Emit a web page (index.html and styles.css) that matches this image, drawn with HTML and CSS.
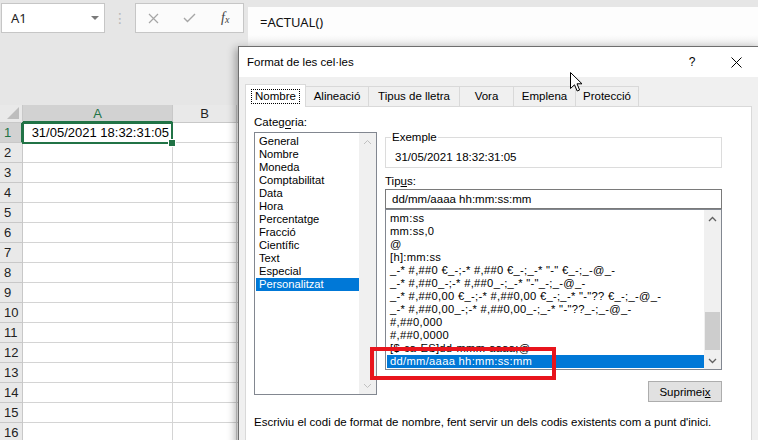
FILE: index.html
```html
<!DOCTYPE html>
<html lang="ca">
<head>
<meta charset="UTF-8">
<meta name="viewport" content="width=device-width, initial-scale=1.0">
<title>Format de les cel·les</title>
<link rel="stylesheet" href="styles.css">
</head>
<body>

<div class="app">
    <!-- name box + formula bar -->
    <div class="topbar">
        <div class="namebox"><span>A1</span><span class="caret"></span></div>
        <div class="grip">⋮</div>
        <div class="fxbtns">
            <span class="fxslot">
                <svg width="11" height="11" viewBox="0 0 11 11"><path d="M1 1 L10 10 M10 1 L1 10" stroke="#a6a6a6" stroke-width="1.2" fill="none"/></svg>
            </span>
            <span class="fxslot">
                <svg width="13" height="10" viewBox="0 0 13 10"><path d="M1 5 L4.5 8.5 L12 1" stroke="#a6a6a6" stroke-width="1.4" fill="none"/></svg>
            </span>
            <span class="fxslot fx">f<small>x</small></span>
        </div>
        <div class="formula">=ACTUAL()</div>
    </div>
    <div class="ribbon-gap"></div>

    <div class="sheet">
        <div class="corner"></div><div class="colhead sel">A</div><div class="colhead">B</div><div class="colhead"></div>
        <div class="rowhead sel">1</div><div class="cell active">31/05/2021 18:32:31:05</div><div class="cell"></div><div class="cell"></div>
        <div class="rowhead">2</div><div class="cell"></div><div class="cell"></div><div class="cell"></div>
        <div class="rowhead">3</div><div class="cell"></div><div class="cell"></div><div class="cell"></div>
        <div class="rowhead">4</div><div class="cell"></div><div class="cell"></div><div class="cell"></div>
        <div class="rowhead">5</div><div class="cell"></div><div class="cell"></div><div class="cell"></div>
        <div class="rowhead">6</div><div class="cell"></div><div class="cell"></div><div class="cell"></div>
        <div class="rowhead">7</div><div class="cell"></div><div class="cell"></div><div class="cell"></div>
        <div class="rowhead">8</div><div class="cell"></div><div class="cell"></div><div class="cell"></div>
        <div class="rowhead">9</div><div class="cell"></div><div class="cell"></div><div class="cell"></div>
        <div class="rowhead">10</div><div class="cell"></div><div class="cell"></div><div class="cell"></div>
        <div class="rowhead">11</div><div class="cell"></div><div class="cell"></div><div class="cell"></div>
        <div class="rowhead">12</div><div class="cell"></div><div class="cell"></div><div class="cell"></div>
        <div class="rowhead">13</div><div class="cell"></div><div class="cell"></div><div class="cell"></div>
        <div class="rowhead">14</div><div class="cell"></div><div class="cell"></div><div class="cell"></div>
        <div class="rowhead">15</div><div class="cell"></div><div class="cell"></div><div class="cell"></div>
        <div class="rowhead">16</div><div class="cell"></div><div class="cell"></div><div class="cell"></div>
    </div>

    <!-- Format Cells dialog window -->
    <div class="dialog">
        <div class="titlebar">
            <span>Format de les cel·les</span>
            <span class="help">?</span>
            <span class="close">
                <svg width="11" height="11" viewBox="0 0 11 11"><path d="M0.5 0.5 L10.5 10.5 M10.5 0.5 L0.5 10.5" stroke="#000" stroke-width="1" fill="none"/></svg>
            </span>
        </div>
        <div class="dlg-body">
            <div class="tabs">
                <div class="tab active" style="width: 61px"><span class="focus">Nombre</span></div>
                <div class="tab" style="width: 64px">Alineació</div>
                <div class="tab" style="width: 92px">Tipus de lletra</div>
                <div class="tab" style="width: 55px">Vora</div>
                <div class="tab" style="width: 63px">Emplena</div>
                <div class="tab" style="width: 64px">Protecció</div>
            </div>
            <div class="panel">
                <div class="panel-main">
                    <div class="left-col">
                        <div class="label cat-label">Categoria:</div>
                        <div class="listbox cat-list">
                            <div class="items">
                                <div class="item">General</div>
                                <div class="item">Nombre</div>
                                <div class="item">Moneda</div>
                                <div class="item">Comptabilitat</div>
                                <div class="item">Data</div>
                                <div class="item">Hora</div>
                                <div class="item">Percentatge</div>
                                <div class="item">Fracció</div>
                                <div class="item">Científic</div>
                                <div class="item">Text</div>
                                <div class="item">Especial</div>
                                <div class="item selected">Personalitzat</div>
                            </div>
                            <div class="scrollbar disabled">
                                <span class="arrow"><svg width="9" height="6" viewBox="0 0 9 6"><path d="M1 5 L4.5 1.5 L8 5" stroke="currentColor" fill="none"/></svg></span>
                                <span class="track"></span>
                                <span class="arrow"><svg width="9" height="6" viewBox="0 0 9 6"><path d="M1 1 L4.5 4.5 L8 1" stroke="currentColor" fill="none"/></svg></span>
                            </div>
                        </div>
                    </div>
                    <div class="right-col">
                        <fieldset class="sample">
                            <legend>Exemple</legend>
                            <div class="sample-value">31/05/2021 18:32:31:05</div>
                        </fieldset>
                        <div class="label type-label">Tip<u>u</u>s:</div>
                        <div class="type-input">dd/mm/aaaa hh:mm:ss:mm</div>
                        <div class="listbox type-list">
                            <div class="items">
                                <div class="item">mm:ss</div>
                                <div class="item">mm:ss,0</div>
                                <div class="item">@</div>
                                <div class="item">[h]:mm:ss</div>
                                <div class="item">_-* #,##0 €_-;-* #,##0 €_-;_-* "-" €_-;_-@_-</div>
                                <div class="item">_-* #,##0_-;-* #,##0_-;_-* "-"_-;_-@_-</div>
                                <div class="item">_-* #,##0,00 €_-;-* #,##0,00 €_-;_-* "-"?? €_-;_-@_-</div>
                                <div class="item">_-* #,##0,00_-;-* #,##0,00_-;_-* "-"??_-;_-@_-</div>
                                <div class="item">#,##0,000</div>
                                <div class="item">#,##0,0000</div>
                                <div class="item">[$-ca-ES]dd-mmm-aaaa;@</div>
                                <div class="item selected">dd/mm/aaaa hh:mm:ss:mm</div>
                            </div>
                            <div class="scrollbar">
                                <span class="arrow"><svg width="9" height="6" viewBox="0 0 9 6"><path d="M1 5 L4.5 1.5 L8 5" stroke="currentColor" stroke-width="1.3" fill="none"/></svg></span>
                                <span class="track"><span class="thumb"></span></span>
                                <span class="arrow"><svg width="9" height="6" viewBox="0 0 9 6"><path d="M1 1 L4.5 4.5 L8 1" stroke="currentColor" stroke-width="1.3" fill="none"/></svg></span>
                            </div>
                        </div>
                        <div class="btn-row"><button class="btn">Suprimei<u>x</u></button></div>
                    </div>
                </div>
                <p class="hint">Escriviu el codi de format de nombre, fent servir un dels codis existents com a punt d'inici.</p>
            </div>
        </div>
    </div>

    <!-- red annotation box -->
    <div class="mark"></div>

    <svg class="cursor" width="13" height="20" viewBox="0 0 13 20">
        <path d="M0.5 0.5 L0.5 16.5 L4.5 12.8 L7.2 19 L9.6 18 L7 11.8 L12 11.8 Z" fill="#fff" stroke="#000" stroke-width="1" stroke-linejoin="round"/>
    </svg>
</div>

</body>
</html>
```

FILE: styles.css
```css
* {
    box-sizing: border-box;
}
body {
    margin: 0;
    font-family: "Noto Sans", sans-serif;
    color: #000;
}
.app {
    position: relative;
    width: 758px;
    height: 440px;
    overflow: hidden;
    background-color: #e6e6e6;
}

/* formula bar */
.topbar {
    display: flex;
    align-items: flex-start;
    height: 46px;
    padding-top: 3px;
}
.namebox {
    display: flex;
    align-items: center;
    width: 104px;
    height: 30px;
    margin-left: 1px;
    padding-left: 9px;
    background-color: #fff;
    border: 1px solid #c6c6c6;
    font-size: 13px;
    color: #222;
}
.caret {
    margin-left: auto;
    margin-right: 5px;
    border-left: 4px solid transparent;
    border-right: 4px solid transparent;
    border-top: 4px solid #7a7a7a;
}
.grip {
    width: 30px;
    text-align: center;
    line-height: 30px;
    font-family: "DejaVu Sans", sans-serif;
    font-size: 14px;
    color: #b8b8b8;
}
.fxbtns {
    display: flex;
    align-items: center;
    width: 109px;
    height: 30px;
    background-color: #fbfbfb;
    border: 1px solid #c6c6c6;
}
.fxslot {
    display: flex;
    justify-content: center;
    align-items: center;
    width: 36px;
}
.fx {
    font-family: "Liberation Serif", serif;
    font-style: italic;
    font-size: 14px;
    color: #444;
}
.fx small {
    font-size: 10px;
    margin-top: 3px;
}
.formula {
    flex: 1;
    height: 39px;
    margin-left: 4px;
    margin-top: 4px;
    padding: 6px 0 0 12px;
    line-height: 18px;
    font-size: 13px;
    color: #111;
    background: linear-gradient(#fdfdfd 72%, #ececec);
}
.ribbon-gap {
    height: 59px;
}

/* worksheet */
.sheet {
    display: grid;
    grid-template-columns: 23px 150px 64px 64px;
    grid-template-rows: 18px repeat(16, 20px);
    background-color: #fff;
}
.corner, .colhead, .rowhead {
    background-color: #e9e9e9;
    border-right: 1px solid #c8c8c8;
    border-bottom: 1px solid #c8c8c8;
    font-family: "Liberation Sans", sans-serif;
    font-size: 13px;
    color: #222;
}
.corner {
    position: relative;
}
.corner::after {
    content: "";
    position: absolute;
    right: 3px;
    bottom: 3px;
    border-left: 12px solid transparent;
    border-bottom: 12px solid #bdbdbd;
}
.colhead {
    text-align: center;
    line-height: 17px;
}
.rowhead {
    padding-left: 4px;
    line-height: 20px;
}
.colhead.sel, .rowhead.sel {
    background-color: #d2d2d2;
    color: #217346;
}
.colhead.sel {
    border-bottom: 2px solid #217346;
}
.rowhead.sel {
    border-right: 2px solid #217346;
}
.cell {
    border-right: 1px solid #d4d4d4;
    border-bottom: 1px solid #d4d4d4;
    font-family: "Liberation Sans", sans-serif;
    font-size: 13px;
    line-height: 20px;
    text-align: right;
    padding-right: 3px;
}
.cell.active {
    position: relative;
}
.cell.active::after {
    content: "";
    position: absolute;
    left: -1px;
    top: -1px;
    right: -1px;
    bottom: -2px;
    border: 2px solid #217346;
}
.cell.active::before {
    content: "";
    position: absolute;
    right: -4px;
    bottom: -5px;
    width: 6px;
    height: 6px;
    background-color: #217346;
    border: 1px solid #fff;
    z-index: 1;
}

/* dialog */
.dialog {
    position: absolute;
    left: 238px;
    top: 46px;
    width: 522px;
    height: 400px;
    background-color: #f0f0f0;
    border: 1px solid #6e6e6e;
    box-shadow: -3px 2px 8px rgba(0, 0, 0, 0.3);
    font-family: "Liberation Sans", sans-serif;
    font-size: 11.5px;
}
.titlebar {
    display: flex;
    align-items: center;
    height: 30px;
    padding-left: 8px;
    background-color: #fff;
}
.help {
    margin-left: auto;
    width: 20px;
    text-align: center;
    font-size: 12px;
}
.close {
    display: flex;
    justify-content: center;
    width: 46px;
    margin-left: 11px;
}
.dlg-body {
    padding: 7px 7px 0 6px;
}
.tabs {
    display: flex;
    align-items: flex-end;
    height: 22px;
}
.tab {
    height: 20px;
    margin-left: -1px;
    line-height: 19px;
    text-align: center;
    background-color: #f0f0f0;
    border: 1px solid #d9d9d9;
    border-bottom: none;
}
.tab:first-child {
    margin-left: 0;
}
.tab.active {
    position: relative;
    z-index: 1;
    height: 23px;
    margin-bottom: -1px;
    padding-top: 2px;
    background-color: #fff;
}
.focus {
    padding: 0 3px 1px;
    outline: 1px dotted #000;
}
.panel {
    width: 507px;
    height: 340px;
    padding: 8px 0 0 8px;
    background-color: #fff;
    border: 1px solid #d9d9d9;
}
.panel-main {
    display: flex;
    gap: 8px;
}
.left-col {
    width: 123px;
}
.right-col {
    width: 337px;
}
.label {
    line-height: 15px;
}
/* access-key underline under the "o" of Categoria */
.cat-label {
    background: linear-gradient(#000, #000) no-repeat 31px 13px / 6px 1px;
}
.listbox {
    display: flex;
    border: 1px solid #828790;
    background-color: #fff;
}
.cat-list {
    height: 263px;
    margin-top: 2px;
}
.items {
    flex: 1;
    padding: 2px 0 0 1px;
}
.item {
    height: 13px;
    padding-left: 3px;
    font-size: 11.2px;
    line-height: 13px;
    white-space: nowrap;
}
.type-list .item {
    letter-spacing: 0.3px;
}
.item.selected {
    background-color: #0078d7;
    color: #fff;
}
.scrollbar {
    display: flex;
    flex-direction: column;
    width: 17px;
    background-color: #f0f0f0;
    color: #606060;
}
.scrollbar.disabled {
    color: #c0c0c0;
}
.arrow {
    display: flex;
    justify-content: center;
    align-items: center;
    height: 17px;
}
.track {
    flex: 1;
}
.thumb {
    display: block;
    width: 15px;
    height: 38px;
    margin: 85px auto 0;
    background-color: #cdcdcd;
}
.sample {
    margin: 16px 0 0;
    padding: 0 0 3px 9px;
    border: 1px solid #dcdcdc;
    min-width: 0;
}
.sample legend {
    padding: 0 1px;
    margin-left: -4px;
    line-height: 13px;
}
.sample-value {
    margin-top: 6px;
    line-height: 14px;
}
.type-label {
    margin-top: 6px;
    line-height: 14px;
}
.type-input {
    height: 20px;
    margin-top: 1px;
    padding-left: 6px;
    line-height: 18px;
    border: 1px solid #7a7a7a;
}
.type-list {
    height: 161px;
}
.btn-row {
    margin-top: 11px;
    text-align: right;
}
.btn {
    width: 74px;
    height: 21px;
    padding: 0;
    font-family: inherit;
    font-size: 11.5px;
    color: #000;
    background-color: #e1e1e1;
    border: 1px solid #adadad;
}
.hint {
    margin: 13px 0 0;
    line-height: 14px;
}

/* overlays */
.mark {
    position: absolute;
    left: 370px;
    top: 347px;
    width: 186px;
    height: 33px;
    border: 4px solid #e8141c;
}
.cursor {
    position: absolute;
    left: 570px;
    top: 72px;
}
```
